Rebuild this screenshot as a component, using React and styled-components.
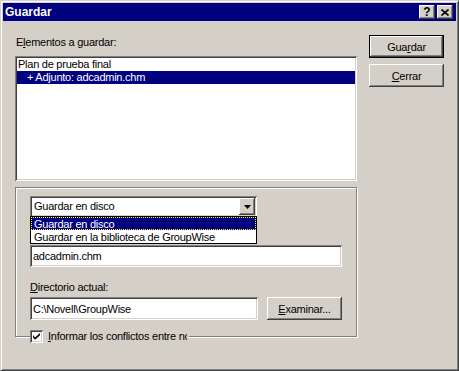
import React from 'react'
import styled, { createGlobalStyle } from 'styled-components'

const GlobalStyle = createGlobalStyle`
  html, body {
    margin: 0;
    padding: 0;
    background: #d4d0c8;
  }
  body {
    font-family: "Liberation Sans", Arial, sans-serif;
    font-size: 11px;
    letter-spacing: -0.25px;
    color: #000;
  }
`

const raised = `
  box-shadow: inset -1px -1px #404040, inset 1px 1px #fff,
    inset -2px -2px #808080, inset 2px 2px #d4d0c8;
`

const sunken = `
  box-shadow: inset 1px 1px #808080, inset -1px -1px #fff,
    inset 2px 2px #404040, inset -2px -2px #d4d0c8;
`

const Window = styled.div`
  width: 459px;
  height: 371px;
  box-sizing: border-box;
  background: #d4d0c8;
  border: 1px solid #404040;
  border-top-color: #d4d0c8;
  border-left-color: #d4d0c8;
  box-shadow: inset 1px 1px #fff, inset -1px -1px #808080;
  padding: 2px;
  display: flex;
  flex-direction: column;
`

const TitleBar = styled.div`
  height: 18px;
  background: #000080;
  display: flex;
  align-items: center;
  padding: 0 3px 0 2px;
`

const Title = styled.div`
  flex: 1;
  color: #fff;
  font-weight: bold;
  font-size: 12px;
  letter-spacing: 0;
`

const TitleButton = styled.div`
  width: 16px;
  height: 14px;
  margin-left: ${(p) => (p.$gap ? '2px' : '0')};
  background: #d4d0c8;
  ${raised}
  display: flex;
  align-items: center;
  justify-content: center;
  font-weight: bold;
  font-size: 12px;
  line-height: 14px;
  letter-spacing: 0;
`

const Body = styled.div`
  display: flex;
  gap: 12px;
  padding: 14px 12px 0 12px;
`

const LeftCol = styled.div`
  width: 342px;
  display: flex;
  flex-direction: column;
`

const RightCol = styled.div`
  width: 75px;
  display: flex;
  flex-direction: column;
  gap: 6px;
`

const Label = styled.div`
  height: 13px;
  line-height: 13px;
  margin: ${(p) => p.$m || '0'};
  white-space: nowrap;
`

// the file name label sits under the open drop-down list
const HiddenLabelSpace = styled.div`
  height: 28px;
`

const Key = styled.span`
  text-decoration: underline;
  text-underline-offset: 1px;
`

const ListBox = styled.div`
  height: 125px;
  background: #fff;
  ${sunken}
  padding: 2px;
  box-sizing: border-box;
`

const ListItem = styled.div`
  height: 13px;
  line-height: 13px;
  padding-left: ${(p) => p.$indent}px;
  background: ${(p) => (p.$selected ? '#000080' : 'transparent')};
  color: ${(p) => (p.$selected ? '#fff' : '#000')};
  white-space: nowrap;
`

const Group = styled.div`
  margin-top: 6px;
  border: 1px solid #808080;
  box-shadow: inset 1px 1px #fff, 1px 1px #fff;
  padding: 8px 14px 0 14px;
  display: flex;
  flex-direction: column;
`

const Combo = styled.div`
  position: relative;
  width: 227px;
  height: 21px;
  background: #fff;
  ${sunken}
  box-sizing: border-box;
  padding: 2px;
  display: flex;
  align-items: center;
`

const ComboText = styled.div`
  flex: 1;
  padding-left: 2px;
  line-height: 13px;
`

const ArrowButton = styled.div`
  width: 16px;
  height: 17px;
  background: #d4d0c8;
  ${raised}
  display: flex;
  align-items: center;
  justify-content: center;
`

const DropList = styled.div`
  position: absolute;
  left: 0;
  top: 20px;
  width: 227px;
  box-sizing: border-box;
  border: 1px solid #000;
  background: #fff;
  z-index: 2;
`

const DropItem = styled.div`
  height: 13px;
  line-height: 12px;
  padding-left: 2px;
  box-sizing: border-box;
  white-space: nowrap;
  background: ${(p) => (p.$selected ? '#000080' : '#fff')};
  color: ${(p) => (p.$selected ? '#fff' : '#000')};
  border: 1px dotted ${(p) => (p.$selected ? '#ffff00' : 'transparent')};
`

const Field = styled.div`
  width: ${(p) => p.$w}px;
  height: ${(p) => p.$h}px;
  background: #fff;
  ${sunken}
  box-sizing: border-box;
  padding: 2px 3px;
  display: flex;
  align-items: center;
  white-space: nowrap;
`

const Row = styled.div`
  display: flex;
  gap: 9px;
`

const Button = styled.div`
  width: 75px;
  height: 23px;
  box-sizing: border-box;
  background: #d4d0c8;
  ${raised}
  border: ${(p) => (p.$default ? '1px solid #000' : 'none')};
  display: flex;
  align-items: center;
  justify-content: center;
  white-space: nowrap;
`

const CheckRow = styled.div`
  margin-top: 10px;
  margin-bottom: -7px;
  width: 159px;
  height: 13px;
  background: #d4d0c8;
  display: flex;
  align-items: center;
  gap: 5px;
`

const CheckBox = styled.div`
  width: 13px;
  height: 13px;
  box-sizing: border-box;
  background: #fff;
  ${sunken}
  display: flex;
  align-items: center;
  justify-content: center;
`

const CheckLabel = styled.div`
  width: 139px;
  overflow: hidden;
  white-space: nowrap;
  line-height: 13px;
`

export default function App() {
  return (
    <>
      <GlobalStyle />
      <Window>
        <TitleBar>
          <Title>Guardar</Title>
          <TitleButton>?</TitleButton>
          <TitleButton $gap>
            <svg width="8" height="7" viewBox="0 0 8 7">
              <path d="M0.5 0.5 L7.5 6.5 M7.5 0.5 L0.5 6.5" stroke="#000" strokeWidth="1.6" />
            </svg>
          </TitleButton>
        </TitleBar>
        <Body>
          <LeftCol>
            <Label $m="1px 0 7px 1px">
              E<Key>l</Key>ementos a guardar:
            </Label>
            <ListBox>
              <ListItem $indent={1}>Plan de prueba final</ListItem>
              <ListItem $indent={10} $selected>+ Adjunto: adcadmin.chm</ListItem>
            </ListBox>
            <Group>
              <Combo>
                <ComboText>Guardar en disco</ComboText>
                <ArrowButton>
                  <svg width="7" height="4" viewBox="0 0 7 4">
                    <path d="M0 0 H7 L3.5 4 Z" fill="#000" />
                  </svg>
                </ArrowButton>
                <DropList>
                  <DropItem $selected>Guardar en disco</DropItem>
                  <DropItem>Guardar en la biblioteca de GroupWise</DropItem>
                </DropList>
              </Combo>
              <HiddenLabelSpace />
              <Field $w={312} $h={22}>adcadmin.chm</Field>
              <Label $m="14px 0 3px 0">
                <Key>D</Key>irectorio actual:
              </Label>
              <Row>
                <Field $w={228} $h={23}>C:\Novell\GroupWise</Field>
                <Button>
                  <Key>E</Key>xaminar...
                </Button>
              </Row>
              <CheckRow>
                <CheckBox>
                  <svg width="7" height="7" viewBox="0 0 7 7">
                    <path d="M0 2 L2 4.5 L7 0 V2.2 L2 6.8 L0 4.3 Z" fill="#000" />
                  </svg>
                </CheckBox>
                <CheckLabel>
                  <Key>I</Key>nformar los conflictos entre nombres de archivo
                </CheckLabel>
              </CheckRow>
            </Group>
          </LeftCol>
          <RightCol>
            <Button $default>
              Gua<Key>r</Key>dar
            </Button>
            <Button>
              <Key>C</Key>errar
            </Button>
          </RightCol>
        </Body>
      </Window>
    </>
  )
}
